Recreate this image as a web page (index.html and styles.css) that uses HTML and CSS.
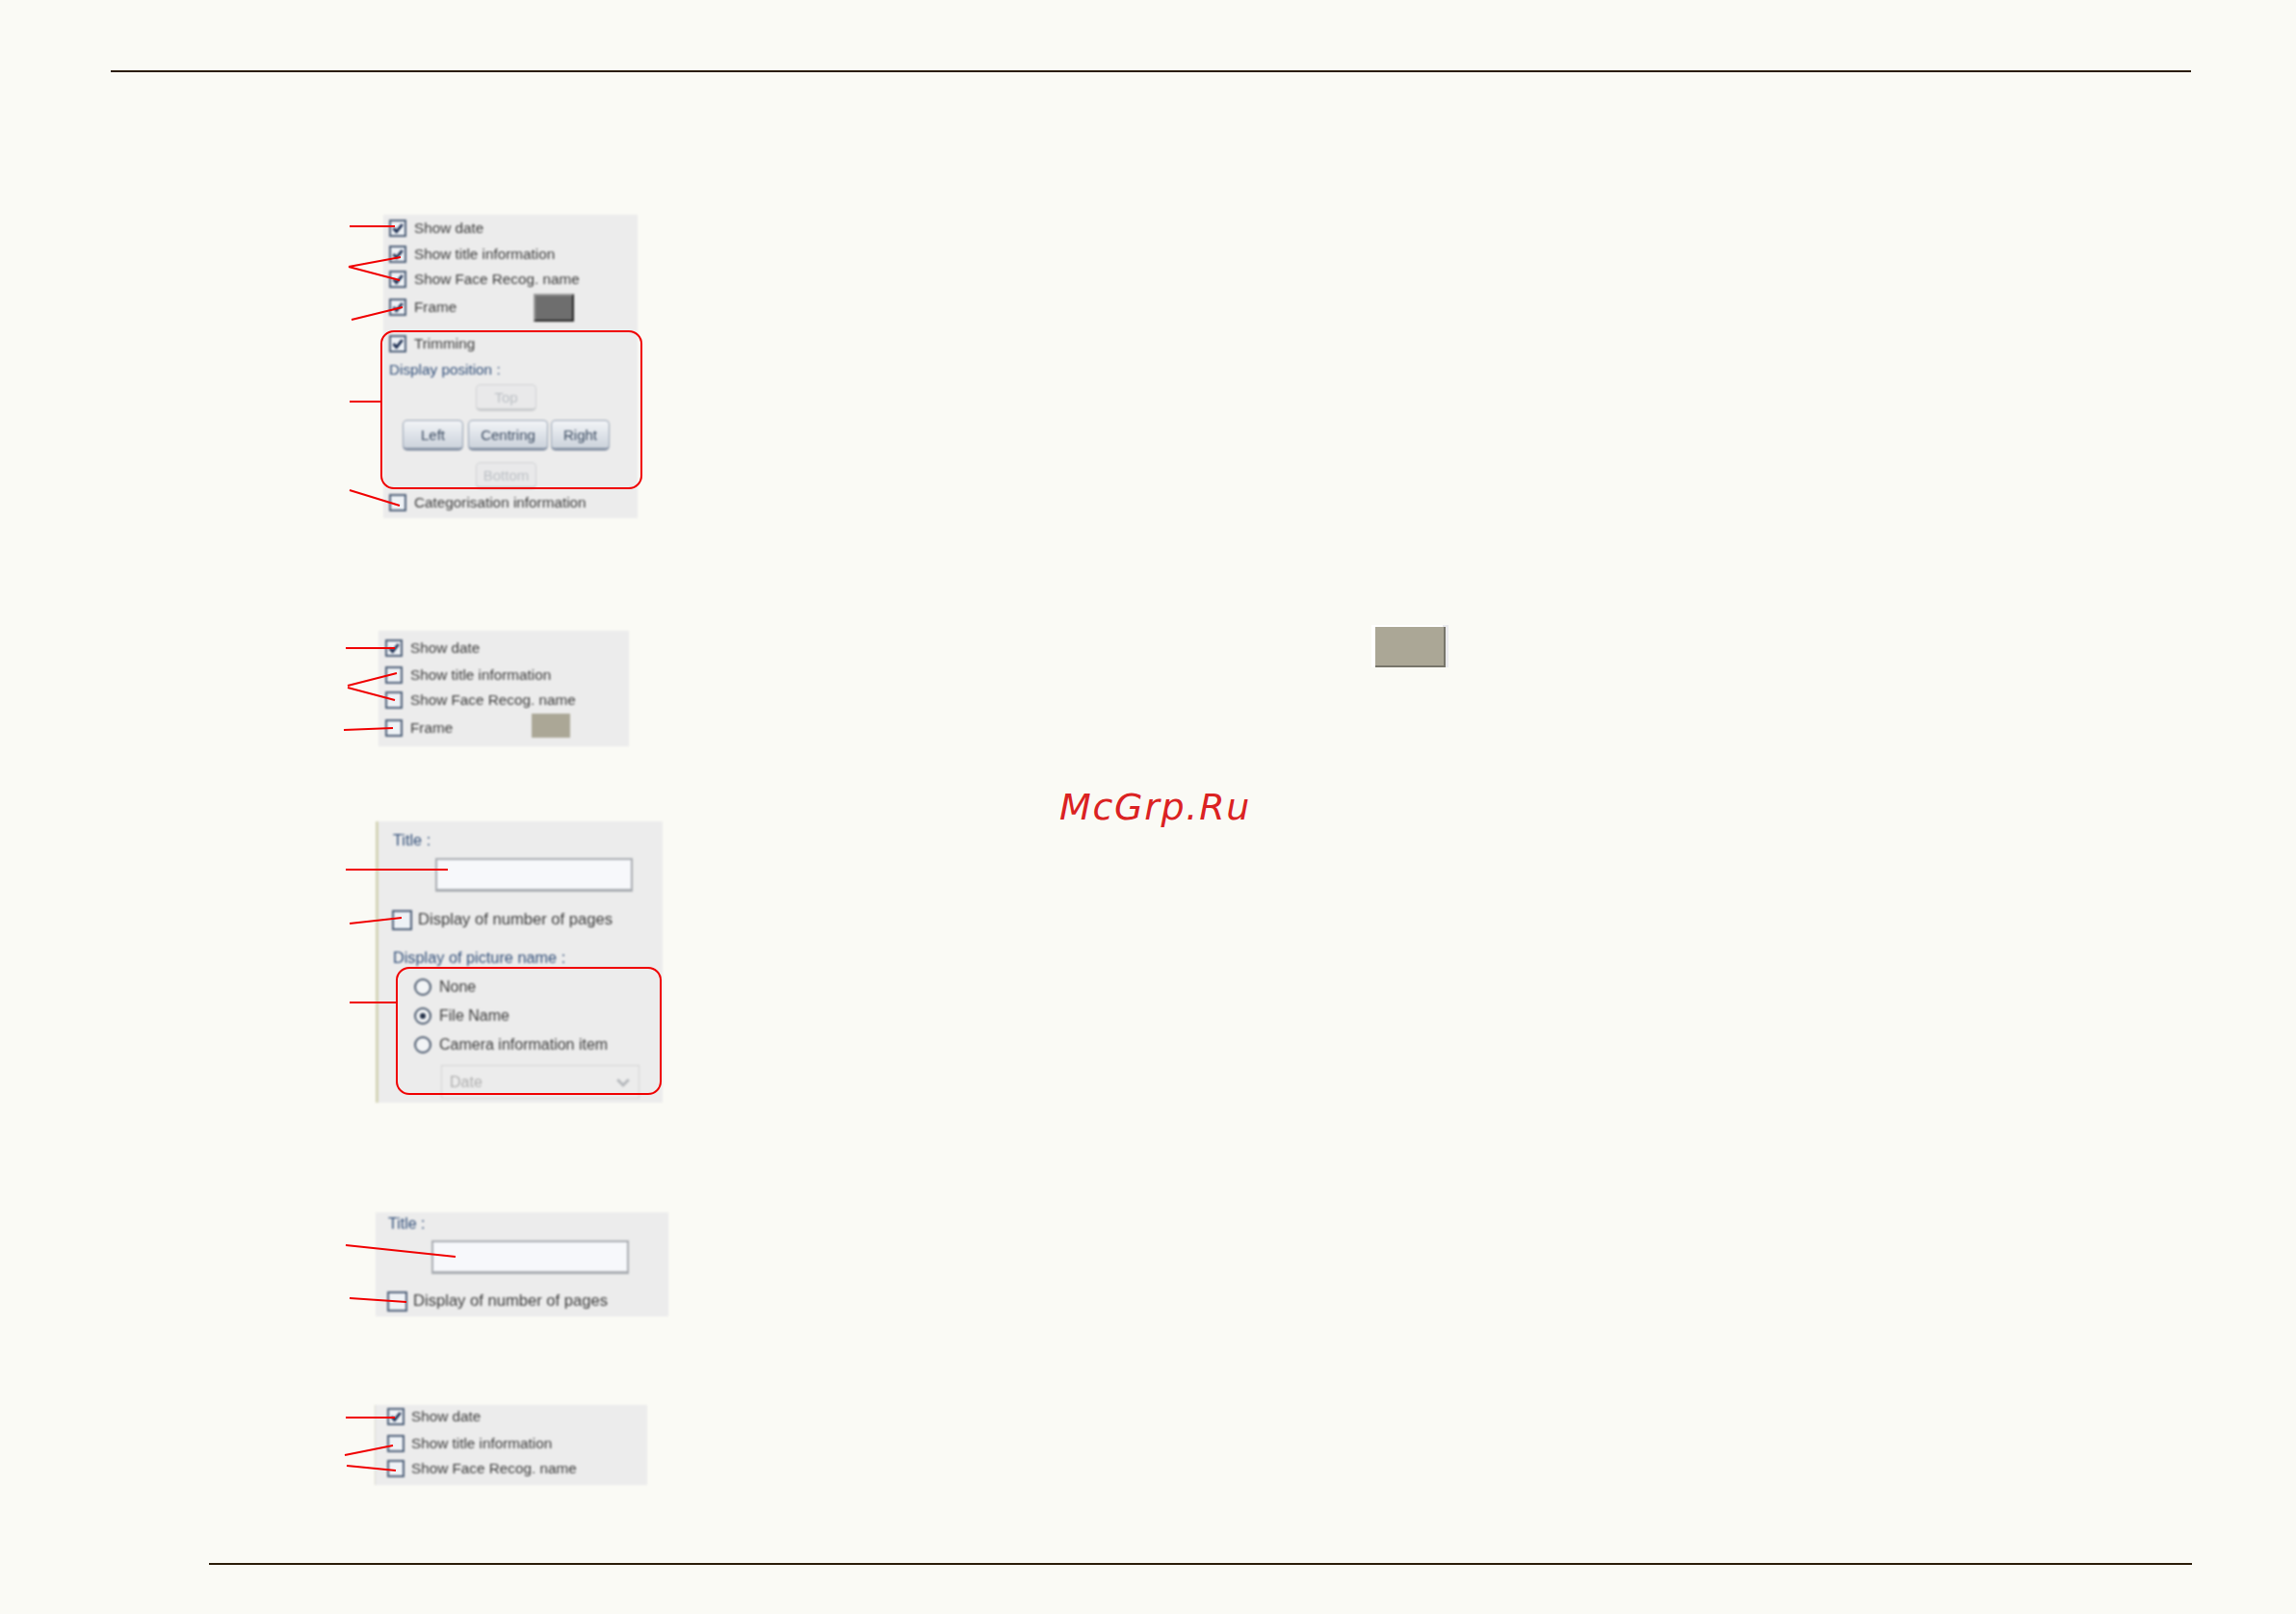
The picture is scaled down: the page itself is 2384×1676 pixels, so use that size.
FILE: index.html
```html
<!DOCTYPE html>
<html lang="en">
<head>
<meta charset="utf-8">
<title>Print settings</title>
<link rel="stylesheet" href="styles.css">
</head>
<body>
<div class="page">
  <div class="rule rule-top"></div>

  <section class="panel p1">
    <div class="row"><span class="cb on"><svg viewBox="0 0 18 18"><path d="M4.5 9l3.2 3.6 6-7.6"/></svg></span><span>Show date</span></div>
    <div class="row t1"><span class="cb on"><svg viewBox="0 0 18 18"><path d="M4.5 9l3.2 3.6 6-7.6"/></svg></span><span>Show title information</span></div>
    <div class="row"><span class="cb on"><svg viewBox="0 0 18 18"><path d="M4.5 9l3.2 3.6 6-7.6"/></svg></span><span>Show Face Recog. name</span></div>
    <div class="row t3"><span class="cb on"><svg viewBox="0 0 18 18"><path d="M4.5 9l3.2 3.6 6-7.6"/></svg></span><span>Frame</span><span class="swatch dark"></span></div>
    <div class="row t12"><span class="cb on"><svg viewBox="0 0 18 18"><path d="M4.5 9l3.2 3.6 6-7.6"/></svg></span><span>Trimming</span></div>
    <div class="row t1 blue">Display position :</div>
    <div class="btn-row top-row"><span class="btn off">Top</span></div>
    <div class="btn-row mid-row"><span class="btn w-left">Left</span><span class="btn w-centre">Centring</span><span class="btn w-right">Right</span></div>
    <div class="btn-row bottom-row"><span class="btn off">Bottom</span></div>
    <div class="row t2"><span class="cb"></span><span>Categorisation information</span></div>
  </section>

  <section class="panel p2">
    <div class="row"><span class="cb on"><svg viewBox="0 0 18 18"><path d="M4.5 9l3.2 3.6 6-7.6"/></svg></span><span>Show date</span></div>
    <div class="row t2"><span class="cb"></span><span>Show title information</span></div>
    <div class="row"><span class="cb"></span><span>Show Face Recog. name</span></div>
    <div class="row t3"><span class="cb"></span><span>Frame</span><span class="swatch tan"></span></div>
  </section>

  <section class="panel p3">
    <div class="blue title-label">Title :</div>
    <div class="field"></div>
    <div class="row big t17"><span class="cb"></span><span>Display of number of pages</span></div>
    <div class="blue title-label t16">Display of picture name :</div>
    <div class="radio-row t10"><span class="radio"></span><span>None</span></div>
    <div class="radio-row t4"><span class="radio sel"></span><span>File Name</span></div>
    <div class="radio-row t4"><span class="radio"></span><span>Camera information item</span></div>
    <div class="select"><span>Date</span><svg viewBox="0 0 12 8"><path d="M1 1.5l5 5 5-5"/></svg></div>
  </section>

  <section class="panel p4">
    <div class="blue title-label">Title :</div>
    <div class="field"></div>
    <div class="row big t16"><span class="cb"></span><span>Display of number of pages</span></div>
  </section>

  <section class="panel p5">
    <div class="row"><span class="cb on"><svg viewBox="0 0 18 18"><path d="M4.5 9l3.2 3.6 6-7.6"/></svg></span><span>Show date</span></div>
    <div class="row t2"><span class="cb"></span><span>Show title information</span></div>
    <div class="row"><span class="cb"></span><span>Show Face Recog. name</span></div>
  </section>

  <div class="big-swatch"></div>
  <div class="watermark">McGrp.Ru</div>

  <svg class="marks" viewBox="0 0 2384 1676" aria-hidden="true">
    <path d="M363 235H410M362 277L416 267M362 277L415 291M365 332L418 319M363 417H396M363 509L415 525"/>
    <rect x="396" y="344" width="270" height="163" rx="13"/>
    <path d="M359 673H410M361 712L412 699M361 714L410 727M357 758L408 756"/>
    <path d="M359 903H465M363 959L417 953M363 1041H412"/>
    <rect x="412" y="1005" width="274" height="131" rx="13"/>
    <path d="M359 1293L473 1305M363 1348L422 1352"/>
    <path d="M359 1472H410M358 1511L408 1501M360 1522L411 1527"/>
  </svg>

  <div class="rule rule-bottom"></div>
</div>
</body>
</html>
```
FILE: styles.css
```css
* { box-sizing: border-box; }
html, body { margin: 0; padding: 0; background: #fafaf5; }
.page {
  position: relative;
  width: 2384px;
  height: 1676px;
  overflow: hidden;
  background: #fafaf5;
  font-family: "Liberation Sans", Arial, sans-serif;
}
.rule { position: absolute; height: 2px; background: #2a1c08; }
.rule-top { left: 115px; width: 2160px; top: 73px; }
.rule-bottom { left: 217px; width: 2059px; top: 1623px; }

.panel {
  position: absolute;
  background: #ececec;
  color: #3c3c3c;
  font-size: 15.3px;
  filter: blur(0.8px);
}
.p1 { left: 398px; top: 223px; width: 264px; height: 315px; padding: 2px 0 0 6px; }
.p2 { left: 393px; top: 655px; width: 260px; height: 120px; padding: 6px 0 0 7px; }
.p3 { left: 390px; top: 853px; width: 298px; height: 292px; padding: 10px 0 0 15px; border-left: 3px solid #d5d5b8; font-size: 16px; }
.p4 { left: 390px; top: 1259px; width: 304px; height: 108px; padding: 3px 0 0 13px; font-size: 16px; }
.p5 { left: 389px; top: 1459px; width: 283px; height: 83px; padding: 0 0 0 12px; border-left: 1px solid #d8d8cf; }
.p5 .row { gap: 7px; }

.row { display: flex; align-items: center; height: 26px; padding-bottom: 2px; gap: 8px; white-space: nowrap; }
.row.big { font-size: 16.6px; gap: 6px; margin-left: -1px; }
.t1 { margin-top: 1px; }
.t2 { margin-top: 2px; }
.t3 { margin-top: 3px; }
.t4 { margin-top: 4px; }
.t10 { margin-top: 10px; }
.t12 { margin-top: 12px; }
.t16 { margin-top: 16px; }
.t17 { margin-top: 17px; }

.cb {
  flex: none;
  width: 18px;
  height: 18px;
  border: 2px solid #4f6079;
  background: #eef2f6;
  display: flex;
}
.row.big .cb { width: 21px; height: 21px; }
.cb svg { position: relative; left: -2px; top: -2px; width: 18px; height: 18px; flex: none; }
.cb svg path { fill: none; stroke: #1a2c50; stroke-width: 2.8; }

.blue { color: #33507a; }
.title-label { line-height: 18px; }
.p3 .title-label { font-size: 16.3px; }
.p3 .title-label:first-child, .p4 .title-label { margin-bottom: 2px; }

.swatch { display: block; flex: none; }
.swatch.dark {
  margin-left: 72px;
  width: 42px;
  height: 29px;
  background: #6e6e6e;
  border: 2px solid;
  border-color: #9a9a9a #262626 #262626 #9a9a9a;
}
.swatch.tan { margin: 0 0 6px 74px; width: 40px; height: 25px; background: #aba796; }

.btn-row { display: flex; justify-content: center; }
.btn {
  display: flex;
  align-items: center;
  justify-content: center;
  height: 32px;
  font-size: 15px;
  color: #3c4c62;
  border: 1px solid #97a3b3;
  border-bottom: 3px solid #8793a5;
  border-radius: 5px;
  background: linear-gradient(#f2f4f7, #ccd3dc);
}
.btn.off {
  width: 63px;
  height: 28px;
  color: #bcc0c5;
  border-color: #d0d2d4;
  border-bottom-color: #cbcdcf;
  background: #e9e9ea;
}
.top-row { width: 63px; margin-left: 90px; margin-top: 1px; }
.mid-row { justify-content: flex-start; gap: 4px; margin-left: 14px; margin-top: 9px; }
.bottom-row { width: 63px; margin-left: 90px; margin-top: 12px; }
.w-left { width: 63px; margin-right: 1px; }
.w-centre { width: 83px; margin-right: -1px; }
.w-right { width: 61px; }

.field {
  width: 205px;
  height: 35px;
  border: 2px solid #a9adb2;
  border-bottom-width: 3px;
  background: #f7f8fb;
}
.p3 .field { margin: 10px 0 0 44px; }
.p4 .field { margin: 8px 0 0 45px; }

.radio-row { display: flex; align-items: center; gap: 8px; height: 26px; padding-bottom: 2px; padding-left: 22px; white-space: nowrap; }
.radio {
  width: 18px;
  height: 18px;
  flex: none;
  border: 2px solid #4f5d71;
  border-radius: 50%;
  background: #f2f4f6;
  display: flex;
  align-items: center;
  justify-content: center;
}
.radio.sel::after { content: ""; width: 6px; height: 6px; border-radius: 50%; background: #26334a; }

.select {
  display: flex;
  align-items: center;
  justify-content: space-between;
  width: 206px;
  height: 35px;
  margin: 7px 0 0 50px;
  padding: 0 9px 0 8px;
  border: 1px solid #d3d3d3;
  color: #b0b0b0;
}
.select svg { width: 14px; height: 10px; }
.select path { fill: none; stroke: #b5b8bc; stroke-width: 2.4; }

.big-swatch {
  position: absolute;
  left: 1424px;
  top: 649px;
  width: 80px;
  height: 44px;
  padding: 2px 5px 2px 4px;
  background: linear-gradient(90deg, #fff 0 92%, #eaeaed 92%);
  filter: blur(0.4px);
}
.big-swatch::before {
  content: "";
  display: block;
  width: 100%;
  height: 100%;
  background: #aba796;
  border-right: 2px solid #77756a;
  border-bottom: 2px solid #77756a;
}

.watermark {
  position: absolute;
  left: 1100px;
  top: 815px;
  font-family: "DejaVu Sans", sans-serif;
  font-style: italic;
  font-size: 38px;
  line-height: 46px;
  letter-spacing: 1.7px;
  color: #db2222;
  white-space: nowrap;
}

.marks { position: absolute; left: 0; top: 0; width: 2384px; height: 1676px; pointer-events: none; }
.marks path, .marks rect { fill: none; stroke: #f00000; stroke-width: 2; }
```
